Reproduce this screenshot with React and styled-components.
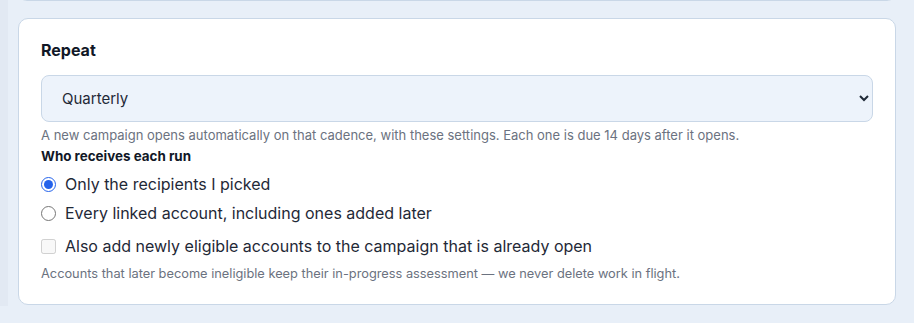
import React from "react";
import styled, { createGlobalStyle } from "styled-components";

const Global = createGlobalStyle`
  html, body { margin: 0; padding: 0; background: #e8eff8; }
  body { font-family: Inter, "Noto Sans", sans-serif; color: #1f2937; }
`;

const Page = styled.div`
  display: flex;
  flex-direction: column;
  gap: 17px;
  margin-top: -17px;
  height: 323px;
  overflow: hidden;
  border-left: 8px solid #e2e9f3;
  box-sizing: border-box;
  padding: 0 18px 0 10px;
`;

const Card = styled.section`
  background: #fff;
  border: 1px solid #c9d7e7;
  border-radius: 10px;
  padding: ${(p) => (p.$stub ? "0" : "21px 22px 22px 22px")};
  min-height: ${(p) => (p.$stub ? "16px" : "auto")};
  flex-shrink: 0;
`;

const Title = styled.h3`
  margin: 0 0 15px;
  font-size: 16px;
  font-weight: 700;
  color: #111827;
  line-height: 20px;
`;

const Select = styled.select`
  width: 100%;
  height: 47px;
  box-sizing: border-box;
  border: 1px solid #c9d7e7;
  border-radius: 8px;
  background: #edf3fb;
  padding: 0 16px 0 16px;
  font-family: Inter, sans-serif;
  font-size: 15px;
  color: #1f2937;
  display: block;
`;

const Help = styled.p`
  margin: ${(p) => p.$m || "0"};
  font-size: ${(p) => p.$size || "13px"};
  line-height: 16px;
  color: #6b7280;
`;

const SubTitle = styled.div`
  font-size: 13.4px;
  font-weight: 700;
  color: #111827;
  line-height: 18px;
  margin-top: 4px;
`;

const Options = styled.div`
  display: flex;
  flex-direction: column;
  gap: 9px;
  margin-top: 9px;
`;

const Option = styled.label`
  display: flex;
  align-items: center;
  gap: 9px;
  font-size: 16px;
  line-height: 20px;
  color: #1f2937;
  margin-top: ${(p) => (p.$extra ? "4px" : "0")};
`;

const Radio = styled.input`
  margin: 0;
  width: 15px;
  height: 15px;
  accent-color: #2563eb;
`;

const Check = styled.input`
  margin: 0;
  width: 15px;
  height: 15px;
`;

export default function App() {
  return (
    <>
      <Global />
      <Page>
        <Card $stub />
        <Card>
          <Title>Repeat</Title>
          <Select defaultValue="quarterly">
            <option value="monthly">Monthly</option>
            <option value="quarterly">Quarterly</option>
            <option value="yearly">Yearly</option>
          </Select>
          <Help $m="5px 0 0">
            A new campaign opens automatically on that cadence, with these settings. Each one is due 14 days after it opens.
          </Help>
          <SubTitle>Who receives each run</SubTitle>
          <Options>
            <Option>
              <Radio type="radio" name="who" defaultChecked />
              Only the recipients I picked
            </Option>
            <Option>
              <Radio type="radio" name="who" />
              Every linked account, including ones added later
            </Option>
            <Option $extra>
              <Check type="checkbox" disabled />
              Also add newly eligible accounts to the campaign that is already open
            </Option>
          </Options>
          <Help $m="10px 0 0" $size="12.8px">
            Accounts that later become ineligible keep their in-progress assessment — we never delete work in flight.
          </Help>
        </Card>
        <Card $stub />
      </Page>
    </>
  );
}
